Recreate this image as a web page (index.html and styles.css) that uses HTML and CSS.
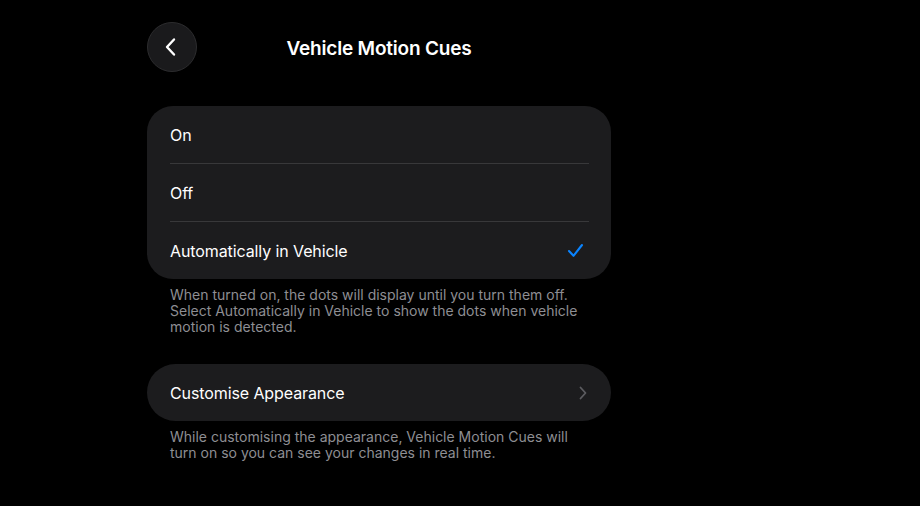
FILE: index.html
```html
<!DOCTYPE html>
<html>
<head>
<meta charset="utf-8">
<link rel="stylesheet" href="styles.css">
</head>
<body>
<div class="page">
  <div class="header">
    <button class="back" aria-label="Back">
      <svg width="14" height="20" viewBox="0 0 14 20"><path d="M10 2.5 L3 10 L10 17.5" fill="none" stroke="#fff" stroke-width="2.4" stroke-linecap="round" stroke-linejoin="round"/></svg>
    </button>
    <h1 class="title">Vehicle Motion Cues</h1>
    <div class="spacer"></div>
  </div>

  <div class="card">
    <div class="row"><span>On</span></div>
    <div class="sep"></div>
    <div class="row"><span>Off</span></div>
    <div class="sep"></div>
    <div class="row"><span>Automatically in Vehicle</span>
      <svg class="check" width="17" height="15" viewBox="0 0 17 15"><path d="M2 8 L6.5 12.8 L15 2" fill="none" stroke="#0a84ff" stroke-width="2.1" stroke-linecap="round" stroke-linejoin="round"/></svg>
    </div>
  </div>
  <p class="note">When turned on, the dots will display until you turn them off. Select Automatically in Vehicle to show the dots when vehicle motion is detected.</p>

  <div class="card pill">
    <div class="row"><span>Customise Appearance</span>
      <svg class="chev" width="8" height="14" viewBox="0 0 8 14"><path d="M1.5 1.5 L6.5 7 L1.5 12.5" fill="none" stroke="#5c5c60" stroke-width="1.8" stroke-linecap="round" stroke-linejoin="round"/></svg>
    </div>
  </div>
  <p class="note">While customising the appearance, Vehicle Motion Cues will turn on so you can see your changes in real time.</p>
</div>
</body>
</html>
```
FILE: styles.css
```css
html, body {
  margin: 0;
  padding: 0;
  background: #000;
  height: 100%;
}
body {
  font-family: Inter, "Noto Sans", sans-serif;
  color: #fff;
}
.page {
  width: 464px;
  margin-left: 147px;
  padding-top: 22px;
}
.header {
  display: grid;
  grid-template-columns: 50px 1fr 50px;
  align-items: center;
  height: 50px;
}
.back {
  width: 50px;
  height: 50px;
  border-radius: 50%;
  background: #1a1a1c;
  border: 1px solid #2c2c2e;
  display: flex;
  align-items: center;
  justify-content: center;
  padding: 0 2px 0 0;
  box-sizing: border-box;
}
.title {
  margin: 2px 0 0;
  text-align: center;
  font-size: 19px;
  font-weight: 600;
  letter-spacing: -0.2px;
}
.card {
  margin-top: 34px;
  background: #1c1c1e;
  border-radius: 26px;
  display: flex;
  flex-direction: column;
}
.row {
  height: 57px;
  display: flex;
  align-items: center;
  justify-content: space-between;
  padding: 0 23px;
  font-size: 16px;
  letter-spacing: -0.1px;
}
.sep {
  height: 1px;
  background: #38383a;
  margin: 0 22px 0 23px;
}
.check {
  margin-right: 4px;
}
.chev {
  margin-right: 1px;
}
.pill {
  margin-top: 29px;
  border-radius: 29px;
}
.note {
  margin: 8px 0 0;
  padding: 0 23px;
  width: 416px;
  font-size: 14px;
  line-height: 16px;
  color: #8e8e93;
}
```
